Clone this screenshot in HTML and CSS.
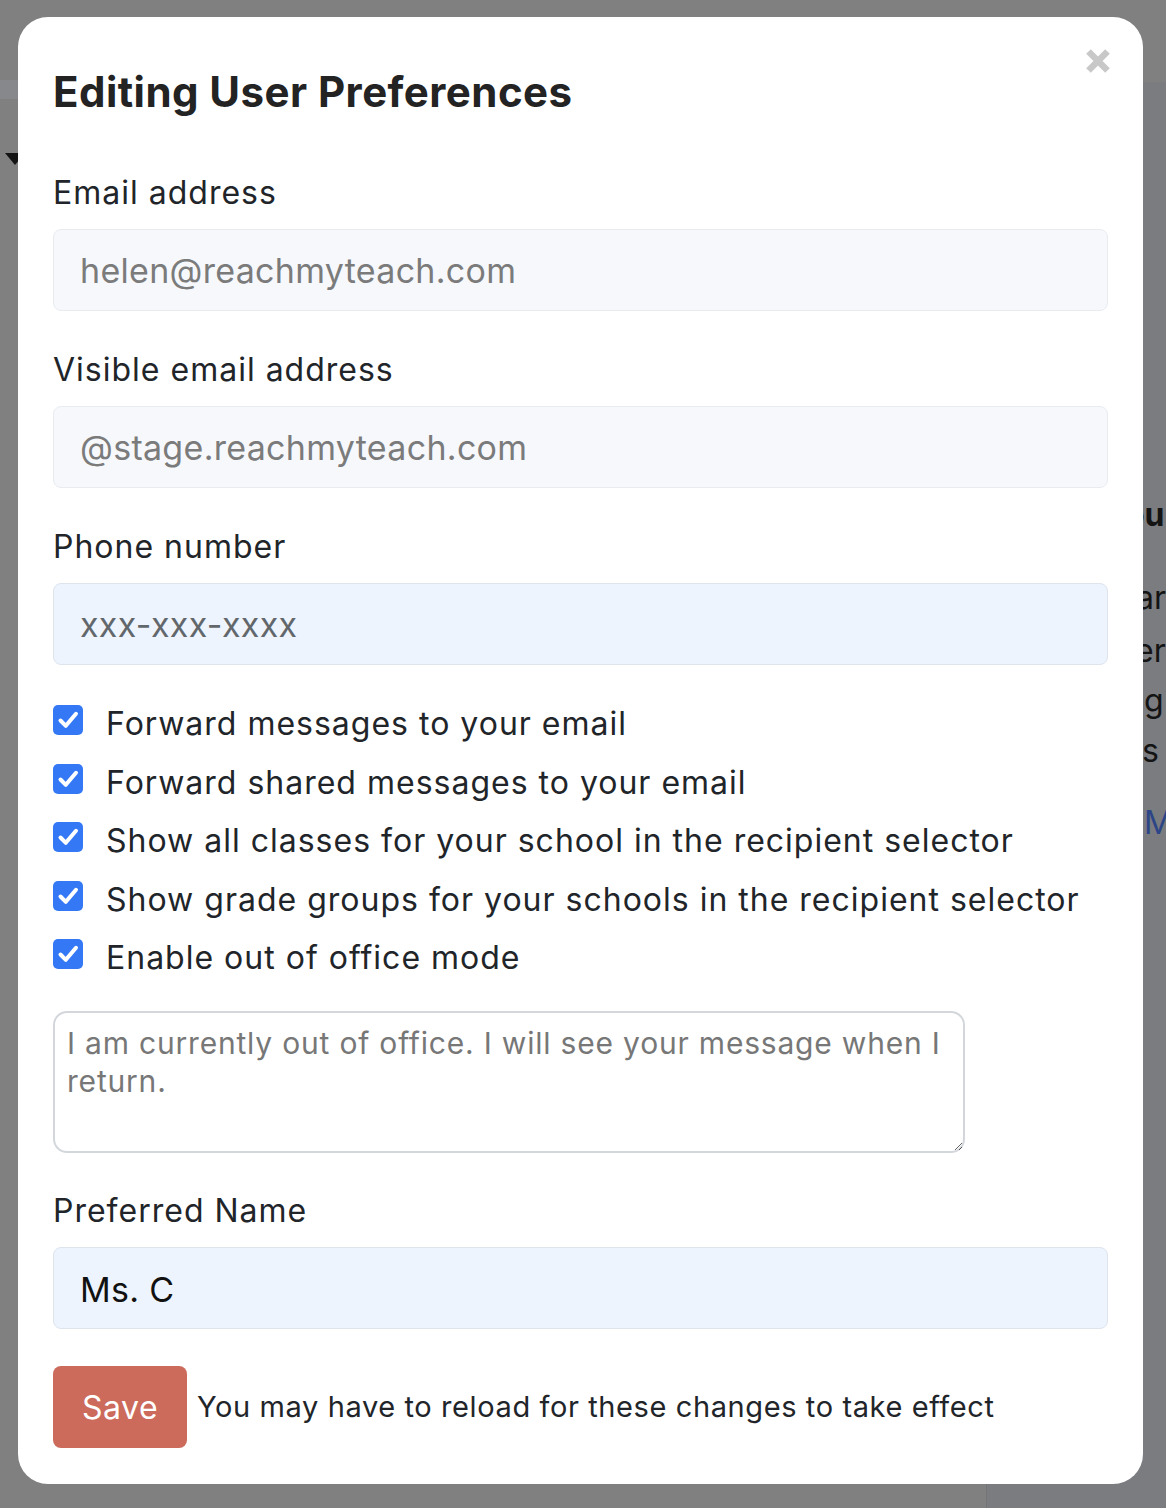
FILE: index.html
```html
<!DOCTYPE html>
<html lang="en">
<head>
<meta charset="utf-8">
<title>Editing User Preferences</title>
<link rel="stylesheet" href="styles.css">
</head>
<body>
<div class="page">
  <header class="topbar"></header>
  <div class="main">
    <div class="content">
      <div class="toolbar"></div>
      <span class="caret"></span>
    </div>
    <aside class="aside">
      <div class="aside-line a1">You</div>
      <div class="aside-line a2">ar</div>
      <div class="aside-line a3">er</div>
      <div class="aside-line a4">g</div>
      <div class="aside-line a5">s</div>
      <div class="aside-line a6">M</div>
    </aside>
  </div>
</div>

<div class="modal" role="dialog" aria-labelledby="modal-title">
  <button class="close" aria-label="Close">
    <svg width="26" height="26" viewBox="0 0 26 26" aria-hidden="true">
      <path d="M3.5 3.5 L22.5 22.5 M22.5 3.5 L3.5 22.5" stroke="#c8c8c8" stroke-width="6.5" fill="none"/>
    </svg>
  </button>
  <h2 class="title" id="modal-title">Editing User Preferences</h2>

  <div class="field">
    <label class="label" for="email">Email address</label>
    <input class="input" id="email" type="text" placeholder="helen@reachmyteach.com">
  </div>
  <div class="field">
    <label class="label" for="visible">Visible email address</label>
    <input class="input" id="visible" type="text" placeholder="@stage.reachmyteach.com">
  </div>
  <div class="field">
    <label class="label" for="phone">Phone number</label>
    <input class="input input-blue" id="phone" type="text" placeholder="xxx-xxx-xxxx">
  </div>

  <div class="checks">
    <label class="check"><span class="box"><svg width="30" height="30" viewBox="0 0 30 30"><path d="M7.5 15.5 L12.8 20.8 L23 8.8" stroke="#fff" stroke-width="4" stroke-linecap="round" stroke-linejoin="round" fill="none"/></svg></span><span class="check-text">Forward messages to your email</span></label>
    <label class="check"><span class="box"><svg width="30" height="30" viewBox="0 0 30 30"><path d="M7.5 15.5 L12.8 20.8 L23 8.8" stroke="#fff" stroke-width="4" stroke-linecap="round" stroke-linejoin="round" fill="none"/></svg></span><span class="check-text">Forward shared messages to your email</span></label>
    <label class="check"><span class="box"><svg width="30" height="30" viewBox="0 0 30 30"><path d="M7.5 15.5 L12.8 20.8 L23 8.8" stroke="#fff" stroke-width="4" stroke-linecap="round" stroke-linejoin="round" fill="none"/></svg></span><span class="check-text">Show all classes for your school in the recipient selector</span></label>
    <label class="check"><span class="box"><svg width="30" height="30" viewBox="0 0 30 30"><path d="M7.5 15.5 L12.8 20.8 L23 8.8" stroke="#fff" stroke-width="4" stroke-linecap="round" stroke-linejoin="round" fill="none"/></svg></span><span class="check-text">Show grade groups for your schools in the recipient selector</span></label>
    <label class="check"><span class="box"><svg width="30" height="30" viewBox="0 0 30 30"><path d="M7.5 15.5 L12.8 20.8 L23 8.8" stroke="#fff" stroke-width="4" stroke-linecap="round" stroke-linejoin="round" fill="none"/></svg></span><span class="check-text">Enable out of office mode</span></label>
  </div>

  <textarea class="textarea" placeholder="I am currently out of office. I will see your message when I return."></textarea>

  <div class="field">
    <label class="label" for="pname">Preferred Name</label>
    <input class="input input-blue input-value" id="pname" type="text" value="Ms. C">
  </div>

  <div class="actions">
    <button class="save">Save</button>
    <span class="note">You may have to reload for these changes to take effect</span>
  </div>
</div>
</body>
</html>
```

FILE: styles.css
```css
* { box-sizing: border-box; }

html, body {
  margin: 0;
  padding: 0;
}

body {
  width: 1166px;
  height: 1508px;
  overflow: hidden;
  background: #808080;
  font-family: Inter, "Noto Sans", "Liberation Sans", sans-serif;
  color: #212529;
}

/* dimmed page behind the dialog */
.page {
  display: flex;
  flex-direction: column;
  height: 1508px;
}

.topbar {
  height: 80px;
  flex: none;
  background: #808080;
}

.main {
  flex: 1;
  display: flex;
}

.content {
  flex: 1;
  background: #808080;
}

.toolbar {
  height: 19px;
  background: #86888c;
}

.caret {
  display: block;
  width: 0;
  height: 0;
  margin: 54px 0 0 5px;
  border-left: 10px solid transparent;
  border-right: 10px solid transparent;
  border-top: 12px solid #141414;
}

.aside {
  width: 180px;
  flex: none;
  margin-top: 2px;
  background: #7a7c80;
  border-left: 1px solid #737578;
  font-size: 32px;
  line-height: 50px;
  color: #141414;
  overflow: hidden;
  white-space: nowrap;
}

.aside-line { height: 50px; }
.a1 { margin-top: 408px; margin-left: 118px; font-weight: 700; }
.a2 { margin-top: 33px; margin-left: 149px; }
.a3 { margin-top: 3px; margin-left: 148px; }
.a4 { margin-left: 157px; }
.a5 { margin-left: 155px; }
.a6 { margin-top: 22px; margin-left: 157px; color: #2c4587; }

/* dialog */
.modal {
  position: absolute;
  left: 18px;
  top: 17px;
  width: 1125px;
  padding: 35px 35px 36px 35px;
  background: #fff;
  border-radius: 30px;
}

.close {
  position: absolute;
  top: 31px;
  right: 32px;
  width: 26px;
  height: 26px;
  padding: 0;
  border: 0;
  background: none;
  display: block;
}
.close svg { display: block; }

.title {
  margin: 15px 0 54px;
  font-size: 42px;
  line-height: 50px;
  font-weight: 700;
  letter-spacing: 0.45px;
  color: #232323;
}

.field { margin-bottom: 37px; }

.label {
  display: block;
  height: 40px;
  padding-top: 2px;
  font-size: 32px;
  line-height: 40px;
  letter-spacing: 1px;
  margin-bottom: 18px;
  color: #212529;
}

.input {
  display: block;
  width: 100%;
  height: 82px;
  padding: 0 26px;
  font-family: inherit;
  font-size: 34px;
  letter-spacing: 0.3px;
  color: #212529;
  background: #f6f8fc;
  border: 1.5px solid #e8ecf1;
  border-radius: 8px;
  outline: none;
}
.input::placeholder { color: #7b7b7b; opacity: 1; }

.input-blue {
  background: #eef4fd;
  border-color: #dde4ec;
}
.input-blue::placeholder { color: #62676c; }

.input-value { color: #111; padding-top: 4px; }

.checks {
  display: flex;
  flex-direction: column;
  gap: 18.6px;
  margin-bottom: 34.6px;
}

.check {
  display: flex;
  align-items: flex-start;
  gap: 23px;
  height: 40px;
  font-size: 32px;
  line-height: 40px;
  letter-spacing: 1px;
  color: #212529;
  white-space: nowrap;
}

.check-text { padding-top: 2px; }

.box {
  flex: none;
  width: 30px;
  height: 30px;
  margin-top: 3px;
  background: #3478f6;
  border-radius: 5px;
}
.box svg { display: block; }

.textarea {
  display: block;
  width: 912px;
  height: 142px;
  margin: 0 0 36px;
  padding: 11px 12px;
  font-family: inherit;
  font-size: 30px;
  line-height: 38px;
  letter-spacing: 0.8px;
  color: #212529;
  background: #fff;
  border: 2px solid #d3d7dc;
  border-radius: 14px;
  outline: none;
}
.textarea::placeholder { color: #777; opacity: 1; }

.actions {
  display: flex;
  align-items: center;
}

.save {
  height: 82px;
  padding: 2px 29px 0;
  font-family: inherit;
  font-size: 32px;
  letter-spacing: 0.5px;
  color: #fff;
  background: #cc6a5b;
  border: 0;
  border-radius: 8px;
}

.note {
  margin-left: 10px;
  font-size: 29px;
  letter-spacing: 0.6px;
  color: #212529;
}
```
